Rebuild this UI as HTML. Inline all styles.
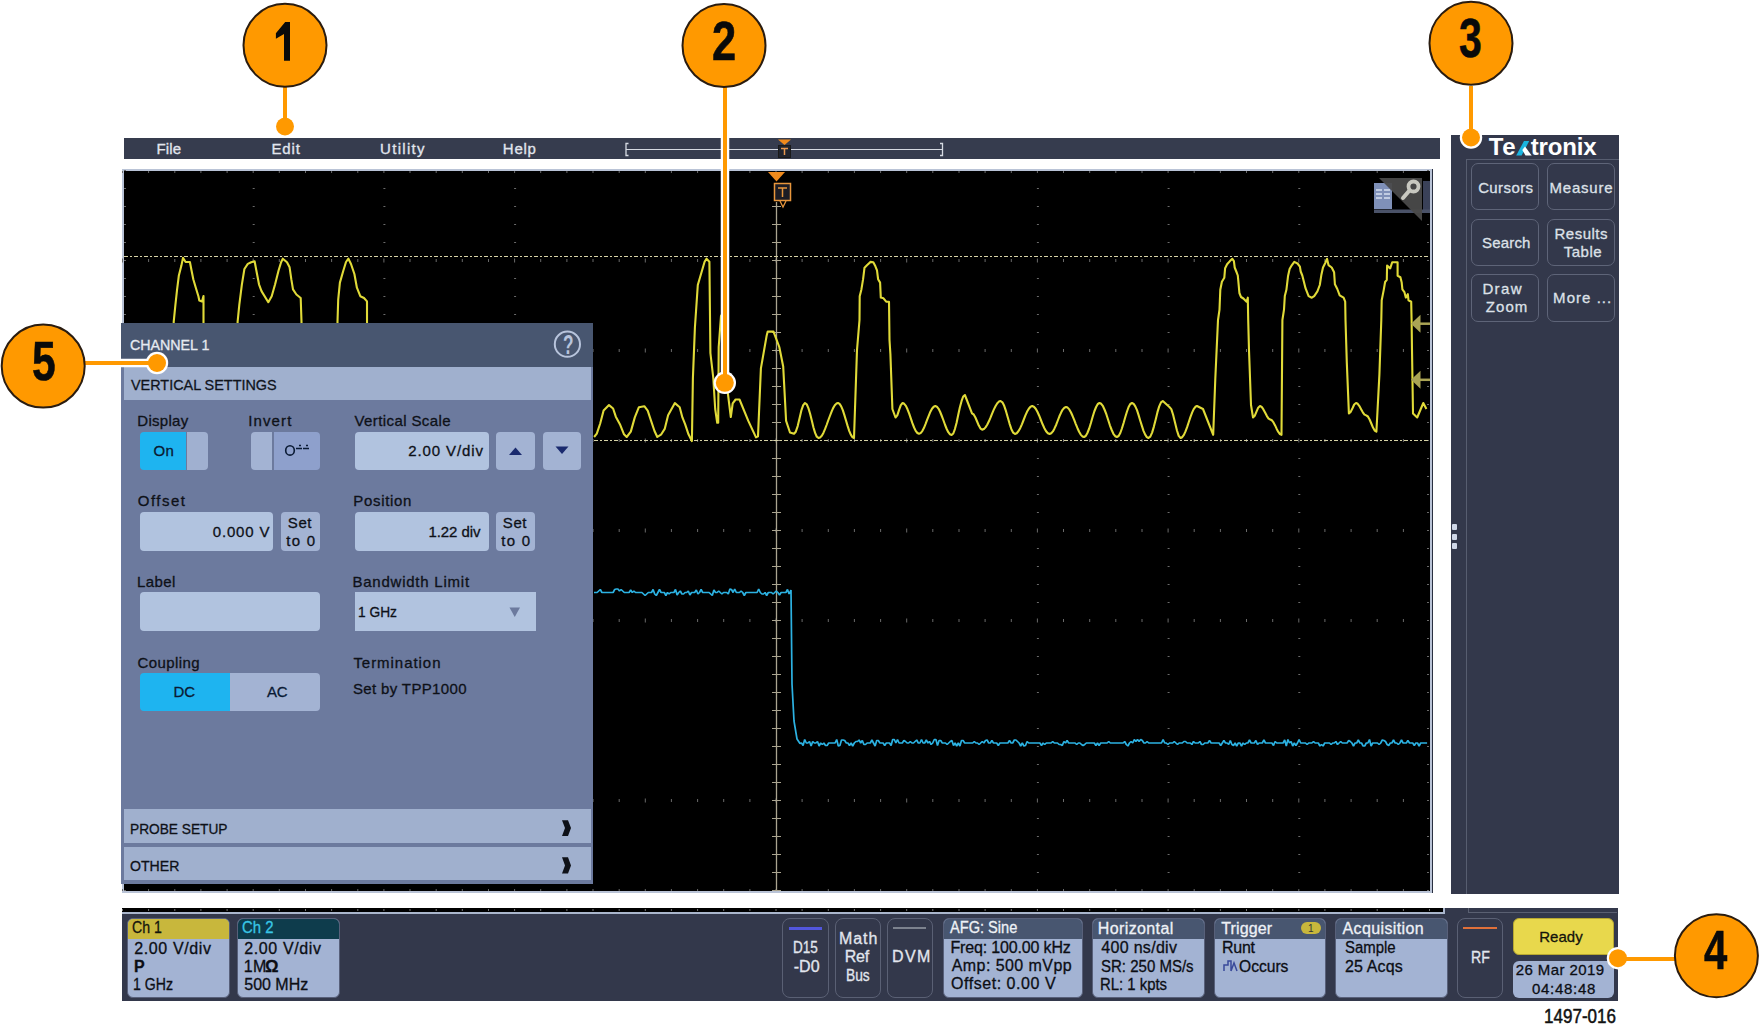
<!DOCTYPE html><html><head><meta charset="utf-8"><style>
*{margin:0;padding:0;box-sizing:border-box}
html,body{width:1760px;height:1030px;overflow:hidden;background:#fff;font-family:"Liberation Sans",sans-serif}
.a{position:absolute}
.t{position:absolute;white-space:nowrap;line-height:1}
svg{position:absolute;left:0;top:0}
.L{position:absolute;left:0;top:0}
</style></head><body>
<div class="a" style="left:124px;top:138px;width:1316px;height:21px;background:#363c4e;"></div>
<div class="t" style="left:156.40px;top:141.40px;font-size:15px;color:#e2e6ee;letter-spacing:0.217px;-webkit-text-stroke:0.3px #e2e6ee;">File</div>
<div class="t" style="left:271.50px;top:141.40px;font-size:15px;color:#e2e6ee;letter-spacing:0.833px;-webkit-text-stroke:0.3px #e2e6ee;">Edit</div>
<div class="t" style="left:380.07px;top:141.40px;font-size:15px;color:#e2e6ee;letter-spacing:1.292px;-webkit-text-stroke:0.3px #e2e6ee;">Utility</div>
<div class="t" style="left:502.80px;top:141.40px;font-size:15px;color:#e2e6ee;letter-spacing:0.758px;-webkit-text-stroke:0.3px #e2e6ee;">Help</div>
<svg width="1760" height="1030"><line x1="626" y1="149.5" x2="942" y2="149.5" stroke="#d6dae2" stroke-width="1"/><path d="M628.5 143.5 H626 V155.5 H628.5 M940 143.5 H942.5 V155.5 H940" fill="none" stroke="#d6dae2" stroke-width="1.3"/><path d="M778 139.5 H791 L784.5 145 Z" fill="#f08a1c"/><rect x="778.5" y="145.5" width="12" height="12" fill="#20242e" stroke="#1a1a1a" stroke-width="1"/><path d="M781 148.5 H788 M784.5 148.5 V155" stroke="#e89850" stroke-width="1.5"/></svg>
<div class="a" style="left:122px;top:169px;width:1311px;height:724px;background:#b9c3d6;"></div>
<div class="a" style="left:1432px;top:169px;width:1px;height:724px;background:#2a3040;"></div>
<div class="a" style="left:124px;top:171px;width:1306px;height:720px;background:#000;"></div>
<svg width="1760" height="1030"><path d="M122.5 258.5v4M148.6 259.0v3M174.8 259.0v3M200.9 259.0v3M227.1 259.0v3M253.2 258.5v4M279.3 259.0v3M305.5 259.0v3M331.6 259.0v3M357.8 259.0v3M383.9 258.5v4M410.0 259.0v3M436.2 259.0v3M462.3 259.0v3M488.5 259.0v3M514.6 258.5v4M540.7 259.0v3M566.9 259.0v3M593.0 259.0v3M619.2 259.0v3M645.3 258.5v4M671.4 259.0v3M697.6 259.0v3M723.7 259.0v3M749.9 259.0v3M776.0 258.5v4M802.1 259.0v3M828.3 259.0v3M854.4 259.0v3M880.6 259.0v3M906.7 258.5v4M932.8 259.0v3M959.0 259.0v3M985.1 259.0v3M1011.3 259.0v3M1037.4 258.5v4M1063.5 259.0v3M1089.7 259.0v3M1115.8 259.0v3M1142.0 259.0v3M1168.1 258.5v4M1194.2 259.0v3M1220.4 259.0v3M1246.5 259.0v3M1272.7 259.0v3M1298.8 258.5v4M1324.9 259.0v3M1351.1 259.0v3M1377.2 259.0v3M1403.4 259.0v3M122.5 348.5v4M148.6 349.0v3M174.8 349.0v3M200.9 349.0v3M227.1 349.0v3M253.2 348.5v4M279.3 349.0v3M305.5 349.0v3M331.6 349.0v3M357.8 349.0v3M383.9 348.5v4M410.0 349.0v3M436.2 349.0v3M462.3 349.0v3M488.5 349.0v3M514.6 348.5v4M540.7 349.0v3M566.9 349.0v3M593.0 349.0v3M619.2 349.0v3M645.3 348.5v4M671.4 349.0v3M697.6 349.0v3M723.7 349.0v3M749.9 349.0v3M776.0 348.5v4M802.1 349.0v3M828.3 349.0v3M854.4 349.0v3M880.6 349.0v3M906.7 348.5v4M932.8 349.0v3M959.0 349.0v3M985.1 349.0v3M1011.3 349.0v3M1037.4 348.5v4M1063.5 349.0v3M1089.7 349.0v3M1115.8 349.0v3M1142.0 349.0v3M1168.1 348.5v4M1194.2 349.0v3M1220.4 349.0v3M1246.5 349.0v3M1272.7 349.0v3M1298.8 348.5v4M1324.9 349.0v3M1351.1 349.0v3M1377.2 349.0v3M1403.4 349.0v3M122.5 438.5v4M148.6 439.0v3M174.8 439.0v3M200.9 439.0v3M227.1 439.0v3M253.2 438.5v4M279.3 439.0v3M305.5 439.0v3M331.6 439.0v3M357.8 439.0v3M383.9 438.5v4M410.0 439.0v3M436.2 439.0v3M462.3 439.0v3M488.5 439.0v3M514.6 438.5v4M540.7 439.0v3M566.9 439.0v3M593.0 439.0v3M619.2 439.0v3M645.3 438.5v4M671.4 439.0v3M697.6 439.0v3M723.7 439.0v3M749.9 439.0v3M776.0 438.5v4M802.1 439.0v3M828.3 439.0v3M854.4 439.0v3M880.6 439.0v3M906.7 438.5v4M932.8 439.0v3M959.0 439.0v3M985.1 439.0v3M1011.3 439.0v3M1037.4 438.5v4M1063.5 439.0v3M1089.7 439.0v3M1115.8 439.0v3M1142.0 439.0v3M1168.1 438.5v4M1194.2 439.0v3M1220.4 439.0v3M1246.5 439.0v3M1272.7 439.0v3M1298.8 438.5v4M1324.9 439.0v3M1351.1 439.0v3M1377.2 439.0v3M1403.4 439.0v3M122.5 528.5v4M148.6 529.0v3M174.8 529.0v3M200.9 529.0v3M227.1 529.0v3M253.2 528.5v4M279.3 529.0v3M305.5 529.0v3M331.6 529.0v3M357.8 529.0v3M383.9 528.5v4M410.0 529.0v3M436.2 529.0v3M462.3 529.0v3M488.5 529.0v3M514.6 528.5v4M540.7 529.0v3M566.9 529.0v3M593.0 529.0v3M619.2 529.0v3M645.3 528.5v4M671.4 529.0v3M697.6 529.0v3M723.7 529.0v3M749.9 529.0v3M776.0 528.5v4M802.1 529.0v3M828.3 529.0v3M854.4 529.0v3M880.6 529.0v3M906.7 528.5v4M932.8 529.0v3M959.0 529.0v3M985.1 529.0v3M1011.3 529.0v3M1037.4 528.5v4M1063.5 529.0v3M1089.7 529.0v3M1115.8 529.0v3M1142.0 529.0v3M1168.1 528.5v4M1194.2 529.0v3M1220.4 529.0v3M1246.5 529.0v3M1272.7 529.0v3M1298.8 528.5v4M1324.9 529.0v3M1351.1 529.0v3M1377.2 529.0v3M1403.4 529.0v3M122.5 618.5v4M148.6 619.0v3M174.8 619.0v3M200.9 619.0v3M227.1 619.0v3M253.2 618.5v4M279.3 619.0v3M305.5 619.0v3M331.6 619.0v3M357.8 619.0v3M383.9 618.5v4M410.0 619.0v3M436.2 619.0v3M462.3 619.0v3M488.5 619.0v3M514.6 618.5v4M540.7 619.0v3M566.9 619.0v3M593.0 619.0v3M619.2 619.0v3M645.3 618.5v4M671.4 619.0v3M697.6 619.0v3M723.7 619.0v3M749.9 619.0v3M776.0 618.5v4M802.1 619.0v3M828.3 619.0v3M854.4 619.0v3M880.6 619.0v3M906.7 618.5v4M932.8 619.0v3M959.0 619.0v3M985.1 619.0v3M1011.3 619.0v3M1037.4 618.5v4M1063.5 619.0v3M1089.7 619.0v3M1115.8 619.0v3M1142.0 619.0v3M1168.1 618.5v4M1194.2 619.0v3M1220.4 619.0v3M1246.5 619.0v3M1272.7 619.0v3M1298.8 618.5v4M1324.9 619.0v3M1351.1 619.0v3M1377.2 619.0v3M1403.4 619.0v3M122.5 798.5v4M148.6 799.0v3M174.8 799.0v3M200.9 799.0v3M227.1 799.0v3M253.2 798.5v4M279.3 799.0v3M305.5 799.0v3M331.6 799.0v3M357.8 799.0v3M383.9 798.5v4M410.0 799.0v3M436.2 799.0v3M462.3 799.0v3M488.5 799.0v3M514.6 798.5v4M540.7 799.0v3M566.9 799.0v3M593.0 799.0v3M619.2 799.0v3M645.3 798.5v4M671.4 799.0v3M697.6 799.0v3M723.7 799.0v3M749.9 799.0v3M776.0 798.5v4M802.1 799.0v3M828.3 799.0v3M854.4 799.0v3M880.6 799.0v3M906.7 798.5v4M932.8 799.0v3M959.0 799.0v3M985.1 799.0v3M1011.3 799.0v3M1037.4 798.5v4M1063.5 799.0v3M1089.7 799.0v3M1115.8 799.0v3M1142.0 799.0v3M1168.1 798.5v4M1194.2 799.0v3M1220.4 799.0v3M1246.5 799.0v3M1272.7 799.0v3M1298.8 798.5v4M1324.9 799.0v3M1351.1 799.0v3M1377.2 799.0v3M1403.4 799.0v3M252.7 188.5h2M252.7 206.5h2M252.7 224.5h2M252.7 242.5h2M252.7 278.5h2M252.7 296.5h2M252.7 314.5h2M252.7 332.5h2M252.7 368.5h2M252.7 386.5h2M252.7 404.5h2M252.7 422.5h2M252.7 458.5h2M252.7 476.5h2M252.7 494.5h2M252.7 512.5h2M252.7 548.5h2M252.7 566.5h2M252.7 584.5h2M252.7 602.5h2M252.7 638.5h2M252.7 656.5h2M252.7 674.5h2M252.7 692.5h2M252.7 728.5h2M252.7 746.5h2M252.7 764.5h2M252.7 782.5h2M252.7 818.5h2M252.7 836.5h2M252.7 854.5h2M252.7 872.5h2M383.4 188.5h2M383.4 206.5h2M383.4 224.5h2M383.4 242.5h2M383.4 278.5h2M383.4 296.5h2M383.4 314.5h2M383.4 332.5h2M383.4 368.5h2M383.4 386.5h2M383.4 404.5h2M383.4 422.5h2M383.4 458.5h2M383.4 476.5h2M383.4 494.5h2M383.4 512.5h2M383.4 548.5h2M383.4 566.5h2M383.4 584.5h2M383.4 602.5h2M383.4 638.5h2M383.4 656.5h2M383.4 674.5h2M383.4 692.5h2M383.4 728.5h2M383.4 746.5h2M383.4 764.5h2M383.4 782.5h2M383.4 818.5h2M383.4 836.5h2M383.4 854.5h2M383.4 872.5h2M514.1 188.5h2M514.1 206.5h2M514.1 224.5h2M514.1 242.5h2M514.1 278.5h2M514.1 296.5h2M514.1 314.5h2M514.1 332.5h2M514.1 368.5h2M514.1 386.5h2M514.1 404.5h2M514.1 422.5h2M514.1 458.5h2M514.1 476.5h2M514.1 494.5h2M514.1 512.5h2M514.1 548.5h2M514.1 566.5h2M514.1 584.5h2M514.1 602.5h2M514.1 638.5h2M514.1 656.5h2M514.1 674.5h2M514.1 692.5h2M514.1 728.5h2M514.1 746.5h2M514.1 764.5h2M514.1 782.5h2M514.1 818.5h2M514.1 836.5h2M514.1 854.5h2M514.1 872.5h2M1036.9 188.5h2M1036.9 206.5h2M1036.9 224.5h2M1036.9 242.5h2M1036.9 278.5h2M1036.9 296.5h2M1036.9 314.5h2M1036.9 332.5h2M1036.9 368.5h2M1036.9 386.5h2M1036.9 404.5h2M1036.9 422.5h2M1036.9 458.5h2M1036.9 476.5h2M1036.9 494.5h2M1036.9 512.5h2M1036.9 548.5h2M1036.9 566.5h2M1036.9 584.5h2M1036.9 602.5h2M1036.9 638.5h2M1036.9 656.5h2M1036.9 674.5h2M1036.9 692.5h2M1036.9 728.5h2M1036.9 746.5h2M1036.9 764.5h2M1036.9 782.5h2M1036.9 818.5h2M1036.9 836.5h2M1036.9 854.5h2M1036.9 872.5h2M1167.6 188.5h2M1167.6 206.5h2M1167.6 224.5h2M1167.6 242.5h2M1167.6 278.5h2M1167.6 296.5h2M1167.6 314.5h2M1167.6 332.5h2M1167.6 368.5h2M1167.6 386.5h2M1167.6 404.5h2M1167.6 422.5h2M1167.6 458.5h2M1167.6 476.5h2M1167.6 494.5h2M1167.6 512.5h2M1167.6 548.5h2M1167.6 566.5h2M1167.6 584.5h2M1167.6 602.5h2M1167.6 638.5h2M1167.6 656.5h2M1167.6 674.5h2M1167.6 692.5h2M1167.6 728.5h2M1167.6 746.5h2M1167.6 764.5h2M1167.6 782.5h2M1167.6 818.5h2M1167.6 836.5h2M1167.6 854.5h2M1167.6 872.5h2M1298.3 188.5h2M1298.3 206.5h2M1298.3 224.5h2M1298.3 242.5h2M1298.3 278.5h2M1298.3 296.5h2M1298.3 314.5h2M1298.3 332.5h2M1298.3 368.5h2M1298.3 386.5h2M1298.3 404.5h2M1298.3 422.5h2M1298.3 458.5h2M1298.3 476.5h2M1298.3 494.5h2M1298.3 512.5h2M1298.3 548.5h2M1298.3 566.5h2M1298.3 584.5h2M1298.3 602.5h2M1298.3 638.5h2M1298.3 656.5h2M1298.3 674.5h2M1298.3 692.5h2M1298.3 728.5h2M1298.3 746.5h2M1298.3 764.5h2M1298.3 782.5h2M1298.3 818.5h2M1298.3 836.5h2M1298.3 854.5h2M1298.3 872.5h2M122.5 171v2M122.5 889v2M148.6 171v2M148.6 889v2M174.8 171v2M174.8 889v2M200.9 171v2M200.9 889v2M227.1 171v2M227.1 889v2M253.2 171v2M253.2 889v2M279.3 171v2M279.3 889v2M305.5 171v2M305.5 889v2M331.6 171v2M331.6 889v2M357.8 171v2M357.8 889v2M383.9 171v2M383.9 889v2M410.0 171v2M410.0 889v2M436.2 171v2M436.2 889v2M462.3 171v2M462.3 889v2M488.5 171v2M488.5 889v2M514.6 171v2M514.6 889v2M540.7 171v2M540.7 889v2M566.9 171v2M566.9 889v2M593.0 171v2M593.0 889v2M619.2 171v2M619.2 889v2M645.3 171v2M645.3 889v2M671.4 171v2M671.4 889v2M697.6 171v2M697.6 889v2M723.7 171v2M723.7 889v2M749.9 171v2M749.9 889v2M776.0 171v2M776.0 889v2M802.1 171v2M802.1 889v2M828.3 171v2M828.3 889v2M854.4 171v2M854.4 889v2M880.6 171v2M880.6 889v2M906.7 171v2M906.7 889v2M932.8 171v2M932.8 889v2M959.0 171v2M959.0 889v2M985.1 171v2M985.1 889v2M1011.3 171v2M1011.3 889v2M1037.4 171v2M1037.4 889v2M1063.5 171v2M1063.5 889v2M1089.7 171v2M1089.7 889v2M1115.8 171v2M1115.8 889v2M1142.0 171v2M1142.0 889v2M1168.1 171v2M1168.1 889v2M1194.2 171v2M1194.2 889v2M1220.4 171v2M1220.4 889v2M1246.5 171v2M1246.5 889v2M1272.7 171v2M1272.7 889v2M1298.8 171v2M1298.8 889v2M1324.9 171v2M1324.9 889v2M1351.1 171v2M1351.1 889v2M1377.2 171v2M1377.2 889v2M1403.4 171v2M1403.4 889v2M124 170.5h2M1427 170.5h2M124 188.5h2M1427 188.5h2M124 206.5h2M1427 206.5h2M124 224.5h2M1427 224.5h2M124 242.5h2M1427 242.5h2M124 260.5h2M1427 260.5h2M124 278.5h2M1427 278.5h2M124 296.5h2M1427 296.5h2M124 314.5h2M1427 314.5h2M124 332.5h2M1427 332.5h2M124 350.5h2M1427 350.5h2M124 368.5h2M1427 368.5h2M124 386.5h2M1427 386.5h2M124 404.5h2M1427 404.5h2M124 422.5h2M1427 422.5h2M124 440.5h2M1427 440.5h2M124 458.5h2M1427 458.5h2M124 476.5h2M1427 476.5h2M124 494.5h2M1427 494.5h2M124 512.5h2M1427 512.5h2M124 530.5h2M1427 530.5h2M124 548.5h2M1427 548.5h2M124 566.5h2M1427 566.5h2M124 584.5h2M1427 584.5h2M124 602.5h2M1427 602.5h2M124 620.5h2M1427 620.5h2M124 638.5h2M1427 638.5h2M124 656.5h2M1427 656.5h2M124 674.5h2M1427 674.5h2M124 692.5h2M1427 692.5h2M124 710.5h2M1427 710.5h2M124 728.5h2M1427 728.5h2M124 746.5h2M1427 746.5h2M124 764.5h2M1427 764.5h2M124 782.5h2M1427 782.5h2M124 800.5h2M1427 800.5h2M124 818.5h2M1427 818.5h2M124 836.5h2M1427 836.5h2M124 854.5h2M1427 854.5h2M124 872.5h2M1427 872.5h2M124 890.5h2M1427 890.5h2" stroke="#6a6a6a" stroke-width="1"/><line x1="776.5" y1="202" x2="776.5" y2="891" stroke="#aaa490" stroke-width="1.3"/><path d="M772 206.5H781M772 224.5H781M772 242.5H781M772 260.5H781M772 278.5H781M772 296.5H781M772 314.5H781M772 332.5H781M772 350.5H781M772 368.5H781M772 386.5H781M772 404.5H781M772 422.5H781M772 440.5H781M772 458.5H781M772 476.5H781M772 494.5H781M772 512.5H781M772 530.5H781M772 548.5H781M772 566.5H781M772 584.5H781M772 602.5H781M772 620.5H781M772 638.5H781M772 656.5H781M772 674.5H781M772 692.5H781M772 710.5H781M772 728.5H781M772 746.5H781M772 764.5H781M772 782.5H781M772 800.5H781M772 818.5H781M772 836.5H781M772 854.5H781M772 872.5H781M772 890.5H781" stroke="#aaa490" stroke-width="1.2"/><line x1="124" y1="256.5" x2="1430" y2="256.5" stroke="#d6d2a6" stroke-width="1.2" stroke-dasharray="4 2 2 2"/><line x1="124" y1="440.5" x2="1430" y2="440.5" stroke="#d6d2a6" stroke-width="1.2" stroke-dasharray="4 2 2 2"/><path d="M768 172 H785 L776.5 181.5 Z" fill="#f08a1c"/><rect x="774.5" y="183.5" width="16" height="17" fill="#1c1c24" stroke="#e8963c" stroke-width="1.5"/><path d="M778 188 H787 M782.5 188 V197" stroke="#e8963c" stroke-width="1.5"/><path d="M780 201 L783 207 L786 201" fill="none" stroke="#e8963c" stroke-width="1.3"/><polyline points="173.7,440.0 173.7,321.8 175.4,304.8 177.1,289.4 178.8,275.8 181.4,265.6 183.0,257.9 185.6,262.0 189.9,262.0 191.6,270.7 193.3,279.2 195.8,287.7 198.4,296.2 199.3,300.5 202.0,301.5 203.5,296.0 203.5,440.0" fill="none" stroke="#e0da38" stroke-width="2.1" stroke-linejoin="round"/><polyline points="237.6,440.0 237.6,321.8 239.3,304.8 241.9,284.3 244.4,269.0 247.8,263.9 251.2,262.2 254.6,261.3 256.4,270.7 259.0,284.3 261.5,291.1 268.3,302.2 271.7,296.2 275.1,284.3 278.5,270.7 281.1,262.2 282.8,258.7 287.0,262.2 289.6,267.3 291.3,279.2 293.0,289.4 296.4,294.5 300.7,298.0 301.5,321.8 301.5,440.0" fill="none" stroke="#e0da38" stroke-width="2.1" stroke-linejoin="round"/><polyline points="337.3,440.0 337.5,321.8 338.2,299.7 339.9,282.6 343.3,270.7 346.0,262.0 348.4,258.7 351.0,264.0 354.4,274.0 356.9,287.7 360.3,296.2 364.0,298.0 367.0,301.4 367.1,440.0" fill="none" stroke="#e0da38" stroke-width="2.1" stroke-linejoin="round"/><polyline points="594.1,437.0 596.8,433.7 600.2,423.5 603.6,410.6 609.0,405.1 613.1,408.5 615.8,416.7 619.9,424.2 624.0,434.3 626.7,437.0 630.8,431.6 634.8,417.4 638.9,407.2 644.3,406.2 647.7,410.6 651.1,420.8 654.5,431.0 657.3,437.0 661.3,434.3 664.7,428.9 668.1,415.3 674.9,403.1 679.7,407.2 682.4,417.4 685.1,424.2 688.5,434.3 691.9,441.1 692.9,378.0 694.9,327.7 697.8,285.0 704.6,261.7 706.5,258.7 709.4,261.7 710.4,353.0 713.3,378.0 715.2,409.0 717.2,422.8 718.2,422.8 718.7,347.0 721.0,316.0 724.0,312.0 726.0,390.0 727.9,393.7 730.8,417.0 732.7,403.4 735.6,399.5 739.5,399.5 748.3,420.9 756.0,437.4 758.0,436.4 760.9,368.4 766.7,335.4 767.7,331.6 773.5,331.6 779.3,347.0 783.2,366.5 786.1,420.9 790.0,432.5 794.0,433.8 794.0,433.8 795.8,431.7 797.7,426.1 799.5,418.4 801.3,410.7 803.2,405.1 805.0,403.0 806.7,404.3 808.4,408.1 810.1,413.8 811.8,420.5 813.4,427.2 815.1,432.9 816.8,436.7 818.5,438.0 820.1,437.4 821.8,435.7 823.4,432.9 825.0,429.2 826.6,425.0 828.2,420.5 829.9,416.0 831.5,411.8 833.1,408.1 834.8,405.3 836.4,403.6 838.0,403.0 839.6,403.9 841.2,406.3 842.8,410.2 844.4,415.1 846.0,420.5 847.6,425.9 849.2,430.8 850.8,434.7 852.4,437.1 854.0,438.0 857.0,350.0 859.5,320.0 859.7,296.2 861.4,289.4 863.1,279.2 864.5,267.7 867.2,265.0 870.6,261.9 873.3,262.2 875.4,266.3 877.0,270.4 878.1,279.2 880.1,282.6 880.8,297.6 883.5,298.3 886.2,301.7 889.0,301.7 889.5,340.0 890.4,354.0 892.4,409.0 895.5,417.5 895.5,417.5 897.3,415.4 899.0,410.2 900.8,405.1 902.6,403.0 904.2,403.8 905.9,405.9 907.5,409.3 909.2,413.6 910.8,418.4 912.4,423.2 914.1,427.5 915.7,430.9 917.4,433.0 919.0,433.8 920.6,433.1 922.3,431.1 923.9,428.1 925.5,424.2 927.1,419.9 928.8,415.6 930.4,411.7 932.0,408.7 933.7,406.7 935.3,406.0 936.9,406.7 938.6,408.8 940.2,412.0 941.8,416.0 943.5,420.5 945.1,425.0 946.7,429.0 948.3,432.2 950.0,434.3 951.6,435.0 953.3,433.5 954.9,429.1 956.6,422.7 958.2,415.0 959.9,407.3 961.6,400.9 963.2,396.5 964.9,395.0 972.0,413.4 972.0,413.4 973.7,414.5 975.4,417.5 977.1,421.5 978.8,425.6 980.5,428.6 982.2,429.7 983.9,429.1 985.5,427.4 987.2,424.7 988.9,421.3 990.6,417.4 992.2,413.3 993.9,409.4 995.6,406.0 997.3,403.3 998.9,401.6 1000.6,401.0 1002.4,402.3 1004.2,405.8 1006.0,411.2 1007.8,417.5 1009.6,423.8 1011.4,429.2 1013.2,432.7 1015.0,434.0 1016.7,433.3 1018.4,431.3 1020.2,428.2 1021.9,424.3 1023.6,420.0 1025.3,415.7 1027.0,411.8 1028.8,408.7 1030.5,406.7 1032.2,406.0 1033.9,406.7 1035.7,408.7 1037.4,411.8 1039.2,415.7 1040.9,420.0 1042.6,424.3 1044.4,428.2 1046.1,431.3 1047.9,433.3 1049.6,434.0 1051.2,433.3 1052.9,431.4 1054.5,428.4 1056.2,424.7 1057.8,420.5 1059.4,416.3 1061.1,412.6 1062.7,409.6 1064.4,407.7 1066.0,407.0 1067.6,407.6 1069.3,409.4 1070.9,412.2 1072.5,415.8 1074.2,419.9 1075.8,424.1 1077.5,428.2 1079.1,431.8 1080.7,434.6 1082.4,436.4 1084.0,437.0 1085.7,436.0 1087.4,433.0 1089.2,428.5 1090.9,423.0 1092.6,417.0 1094.3,411.5 1096.1,407.0 1097.8,404.0 1099.5,403.0 1101.2,403.8 1103.0,406.2 1104.7,410.0 1106.5,414.7 1108.2,420.0 1109.9,425.3 1111.7,430.0 1113.4,433.8 1115.2,436.2 1116.9,437.0 1118.6,436.0 1120.3,433.0 1121.9,428.5 1123.6,423.0 1125.3,417.0 1127.0,411.5 1128.6,407.0 1130.3,404.0 1132.0,403.0 1133.7,403.9 1135.3,406.3 1137.0,410.2 1138.6,415.1 1140.2,420.5 1141.9,425.9 1143.5,430.8 1145.2,434.7 1146.8,437.1 1148.5,438.0 1150.3,436.6 1152.1,432.6 1153.9,426.6 1155.7,419.5 1157.4,412.4 1159.2,406.4 1161.0,402.4 1162.8,401.0 1169.4,407.0 1169.4,407.0 1171.3,409.1 1173.1,414.8 1175.0,422.5 1176.9,430.2 1178.7,435.9 1180.6,438.0 1182.2,437.2 1183.9,434.9 1185.5,431.4 1187.2,426.9 1188.8,422.0 1190.4,417.1 1192.1,412.6 1193.7,409.1 1195.4,406.8 1197.0,406.0 1203.0,409.0 1213.2,434.8 1215.3,378.7 1218.0,320.0 1219.5,309.7 1220.3,289.8 1221.9,281.8 1224.3,277.8 1225.1,268.3 1227.1,264.3 1229.9,261.1 1232.3,258.8 1233.9,261.1 1234.7,267.5 1236.3,271.5 1237.8,275.5 1238.6,284.2 1239.4,293.0 1241.0,297.0 1243.4,298.5 1246.6,301.7 1247.8,297.7 1248.2,320.0 1249.0,350.0 1251.0,405.0 1253.0,417.4 1253.0,417.4 1254.8,415.7 1256.5,411.7 1258.2,407.7 1260.0,406.0 1261.7,406.9 1263.4,409.4 1265.2,412.8 1266.9,416.1 1268.6,418.6 1270.3,419.5 1271.9,420.3 1273.5,422.4 1275.1,425.4 1276.7,428.9 1278.3,431.9 1279.9,434.0 1281.5,434.8 1282.4,320.0 1284.0,309.7 1284.8,296.1 1286.4,289.8 1288.0,276.3 1289.6,269.1 1291.9,265.1 1294.3,261.9 1297.5,263.5 1299.9,266.7 1300.7,271.5 1302.3,275.5 1303.9,281.8 1305.5,288.2 1308.6,296.1 1311.8,297.7 1314.2,296.1 1317.4,291.4 1319.8,285.0 1321.4,274.7 1323.0,267.5 1325.4,262.7 1327.0,258.8 1328.5,265.1 1331.7,267.5 1334.1,272.3 1334.9,284.2 1337.3,289.0 1339.7,295.3 1343.6,297.7 1345.2,301.7 1345.5,320.0 1346.8,362.4 1348.9,413.4 1348.9,413.4 1350.7,411.9 1352.5,408.2 1354.2,404.5 1356.0,403.0 1357.7,403.8 1359.4,406.1 1361.1,409.2 1362.8,412.3 1364.5,414.6 1366.2,415.4 1367.9,416.5 1369.6,419.5 1371.3,423.5 1373.0,427.6 1374.7,430.6 1376.4,431.7 1379.4,374.6 1381.3,320.0 1381.7,300.3 1383.7,290.1 1385.1,282.0 1386.8,279.9 1387.1,265.6 1390.2,268.4 1392.2,262.2 1397.6,262.2 1397.6,275.8 1400.4,277.2 1401.7,282.6 1402.4,289.4 1404.4,292.1 1405.8,297.6 1407.8,294.2 1408.5,300.3 1411.2,301.7 1411.6,320.0 1412.0,350.0 1413.0,413.4 1417.2,417.5 1423.3,403.0 1426.4,409.0" fill="none" stroke="#e0da38" stroke-width="2.1" stroke-linejoin="round"/><polyline points="594.0,592.5 595.5,592.5 597.1,592.5 598.7,591.0 600.3,589.5 601.9,592.5 603.5,592.5 605.1,592.5 606.7,592.5 608.3,592.5 609.9,592.5 611.5,592.5 613.1,592.5 614.7,589.5 616.3,589.0 617.9,589.0 619.5,591.0 621.1,589.5 622.7,591.0 624.3,592.5 625.9,592.5 627.5,592.5 629.1,592.5 630.7,590.0 632.3,592.5 633.9,591.0 635.5,592.5 637.1,592.5 638.7,592.5 640.3,592.5 641.9,592.5 643.5,594.0 645.1,595.5 646.7,594.0 648.3,592.5 649.9,592.5 651.5,592.5 653.1,589.5 654.7,594.0 656.3,595.5 657.9,592.5 659.5,589.5 661.1,592.5 662.7,592.5 664.3,592.5 665.9,595.5 667.5,592.5 669.1,594.0 670.7,592.5 672.3,592.5 673.9,592.5 675.5,589.5 677.1,595.0 678.7,592.5 680.3,591.0 681.9,594.0 683.5,594.0 685.1,592.5 686.7,592.5 688.3,591.0 689.9,595.0 691.5,592.5 693.1,592.5 694.7,592.5 696.3,590.0 697.9,594.0 699.5,592.5 701.1,589.5 702.7,592.5 704.3,592.5 705.9,592.5 707.5,592.5 709.1,592.5 710.7,594.0 712.3,595.5 713.9,590.0 715.5,592.5 717.1,592.5 718.7,591.0 720.3,592.5 721.9,594.0 723.5,592.5 725.1,592.5 726.7,592.5 728.3,594.0 729.9,589.0 731.5,589.5 733.1,592.5 734.7,589.0 736.3,592.5 737.9,592.5 739.5,592.5 741.1,591.0 742.7,592.5 744.3,595.5 745.9,592.5 747.5,592.5 749.1,592.5 750.7,592.5 752.3,592.5 753.9,592.5 755.5,592.5 757.1,592.5 758.7,589.0 760.3,592.5 761.9,594.0 763.5,594.0 765.1,592.5 766.7,595.5 768.3,592.5 769.9,592.5 771.5,592.5 773.1,594.0 774.7,592.5 776.3,591.0 777.9,592.5 779.5,595.0 781.1,592.5 782.7,592.5 784.3,592.5 785.9,592.5 787.5,589.5 789.1,594.0 791.0,590.0 792.0,684.0 794.0,721.0 797.0,739.0 800.0,743.5 801.5,743.0 803.1,745.5 804.7,739.5 806.3,743.0 807.9,743.0 809.5,741.5 811.1,746.0 812.7,741.5 814.3,743.0 815.9,743.0 817.5,741.5 819.1,746.0 820.7,743.0 822.3,744.5 823.9,743.0 825.5,745.5 827.1,745.5 828.7,743.0 830.3,743.0 831.9,743.0 833.5,743.0 835.1,743.0 836.7,739.5 838.3,746.0 839.9,745.5 841.5,740.0 843.1,740.0 844.7,740.5 846.3,743.0 847.9,743.0 849.5,745.5 851.1,743.0 852.7,746.0 854.3,743.0 855.9,741.5 857.5,741.5 859.1,740.0 860.7,743.0 862.3,740.5 863.9,744.5 865.5,744.5 867.1,743.0 868.7,743.0 870.3,743.0 871.9,740.0 873.5,743.0 875.1,746.0 876.7,740.5 878.3,740.5 879.9,743.0 881.5,743.0 883.1,743.0 884.7,745.5 886.3,743.0 887.9,743.0 889.5,743.0 891.1,745.5 892.7,739.5 894.3,739.5 895.9,743.0 897.5,739.5 899.1,743.0 900.7,743.0 902.3,743.0 903.9,740.5 905.5,741.5 907.1,743.0 908.7,743.0 910.3,741.5 911.9,743.0 913.5,743.0 915.1,741.5 916.7,740.0 918.3,743.0 919.9,743.0 921.5,739.5 923.1,743.0 924.7,743.0 926.3,740.0 927.9,743.0 929.5,741.5 931.1,744.5 932.7,743.0 934.3,739.5 935.9,739.5 937.5,745.5 939.1,740.5 940.7,740.5 942.3,743.0 943.9,743.0 945.5,743.0 947.1,744.5 948.7,743.0 950.3,741.5 951.9,740.5 953.5,745.5 955.1,743.0 956.7,746.0 958.3,743.0 959.9,746.0 961.5,740.5 963.1,740.5 964.7,743.0 966.3,743.0 967.9,743.0 969.5,743.0 971.1,743.0 972.7,743.0 974.3,741.5 975.9,743.0 977.5,743.0 979.1,744.5 980.7,743.0 982.3,741.5 983.9,743.0 985.5,740.5 987.1,740.0 988.7,743.0 990.3,743.0 991.9,740.5 993.5,743.0 995.1,743.0 996.7,743.0 998.3,745.5 999.9,743.0 1001.5,743.0 1003.1,743.0 1004.7,743.0 1006.3,743.0 1007.9,743.0 1009.5,740.5 1011.1,743.0 1012.7,743.0 1014.3,740.0 1015.9,740.0 1017.5,741.5 1019.1,743.0 1020.7,746.0 1022.3,743.0 1023.9,746.0 1025.5,745.5 1027.1,741.5 1028.7,743.0 1030.3,743.0 1031.9,743.0 1033.5,743.0 1035.1,743.0 1036.7,743.0 1038.3,743.0 1039.9,743.0 1041.5,745.5 1043.1,743.0 1044.7,744.5 1046.3,743.0 1047.9,743.0 1049.5,743.0 1051.1,743.0 1052.7,741.5 1054.3,743.0 1055.9,743.0 1057.5,743.0 1059.1,744.5 1060.7,744.5 1062.3,745.5 1063.9,741.5 1065.5,743.0 1067.1,740.5 1068.7,743.0 1070.3,743.0 1071.9,743.0 1073.5,743.0 1075.1,743.0 1076.7,744.5 1078.3,743.0 1079.9,743.0 1081.5,744.5 1083.1,745.5 1084.7,744.5 1086.3,743.0 1087.9,743.0 1089.5,743.0 1091.1,743.0 1092.7,743.0 1094.3,743.0 1095.9,745.5 1097.5,743.0 1099.1,745.5 1100.7,743.0 1102.3,743.0 1103.9,743.0 1105.5,743.0 1107.1,743.0 1108.7,741.5 1110.3,743.0 1111.9,743.0 1113.5,743.0 1115.1,743.0 1116.7,743.0 1118.3,743.0 1119.9,743.0 1121.5,743.0 1123.1,743.0 1124.7,741.5 1126.3,744.5 1127.9,746.0 1129.5,743.0 1131.1,741.5 1132.7,743.0 1134.3,739.5 1135.9,741.5 1137.5,739.5 1139.1,741.5 1140.7,739.5 1142.3,740.5 1143.9,743.0 1145.5,743.0 1147.1,741.5 1148.7,743.0 1150.3,743.0 1151.9,743.0 1153.5,743.0 1155.1,743.0 1156.7,743.0 1158.3,743.0 1159.9,743.0 1161.5,743.0 1163.1,739.5 1164.7,743.0 1166.3,743.0 1167.9,744.5 1169.5,743.0 1171.1,743.0 1172.7,743.0 1174.3,741.5 1175.9,743.0 1177.5,744.5 1179.1,743.0 1180.7,743.0 1182.3,743.0 1183.9,741.5 1185.5,741.5 1187.1,743.0 1188.7,743.0 1190.3,743.0 1191.9,744.5 1193.5,741.5 1195.1,743.0 1196.7,743.0 1198.3,743.0 1199.9,741.5 1201.5,744.5 1203.1,744.5 1204.7,743.0 1206.3,743.0 1207.9,743.0 1209.5,740.5 1211.1,743.0 1212.7,743.0 1214.3,743.0 1215.9,743.0 1217.5,743.0 1219.1,743.0 1220.7,745.5 1222.3,743.0 1223.9,740.5 1225.5,743.0 1227.1,743.0 1228.7,744.5 1230.3,740.5 1231.9,744.5 1233.5,745.5 1235.1,743.0 1236.7,746.0 1238.3,743.0 1239.9,743.0 1241.5,746.0 1243.1,743.0 1244.7,744.5 1246.3,743.0 1247.9,743.0 1249.5,740.0 1251.1,743.0 1252.7,743.0 1254.3,743.0 1255.9,740.5 1257.5,744.5 1259.1,743.0 1260.7,743.0 1262.3,743.0 1263.9,740.0 1265.5,743.0 1267.1,743.0 1268.7,743.0 1270.3,743.0 1271.9,743.0 1273.5,745.5 1275.1,741.5 1276.7,743.0 1278.3,743.0 1279.9,743.0 1281.5,743.0 1283.1,743.0 1284.7,740.0 1286.3,746.0 1287.9,739.5 1289.5,743.0 1291.1,741.5 1292.7,746.0 1294.3,743.0 1295.9,745.5 1297.5,743.0 1299.1,739.5 1300.7,743.0 1302.3,743.0 1303.9,743.0 1305.5,743.0 1307.1,744.5 1308.7,743.0 1310.3,743.0 1311.9,743.0 1313.5,741.5 1315.1,743.0 1316.7,743.0 1318.3,743.0 1319.9,746.0 1321.5,744.5 1323.1,746.0 1324.7,743.0 1326.3,743.0 1327.9,743.0 1329.5,743.0 1331.1,744.5 1332.7,743.0 1334.3,743.0 1335.9,741.5 1337.5,744.5 1339.1,743.0 1340.7,741.5 1342.3,743.0 1343.9,743.0 1345.5,743.0 1347.1,743.0 1348.7,740.5 1350.3,741.5 1351.9,743.0 1353.5,746.0 1355.1,743.0 1356.7,743.0 1358.3,740.0 1359.9,743.0 1361.5,743.0 1363.1,746.0 1364.7,746.0 1366.3,743.0 1367.9,743.0 1369.5,739.5 1371.1,746.0 1372.7,743.0 1374.3,743.0 1375.9,743.0 1377.5,743.0 1379.1,744.5 1380.7,743.0 1382.3,740.0 1383.9,740.5 1385.5,741.5 1387.1,744.5 1388.7,745.5 1390.3,743.0 1391.9,743.0 1393.5,740.0 1395.1,743.0 1396.7,743.0 1398.3,744.5 1399.9,743.0 1401.5,740.0 1403.1,743.0 1404.7,743.0 1406.3,743.0 1407.9,740.5 1409.5,743.0 1411.1,743.0 1412.7,743.0 1414.3,745.5 1415.9,743.0 1417.5,743.0 1419.1,746.0 1420.7,743.0 1422.3,743.0 1423.9,743.0 1425.5,743.0 1427.1,743.0" fill="none" stroke="#2cb2e2" stroke-width="1.7" stroke-linejoin="bevel"/><path d="M1411 323.7 L1420.5 314.7 V332.7 Z" fill="#aaa455"/><line x1="1420" y1="323.7" x2="1430" y2="323.7" stroke="#aaa455" stroke-width="2.5"/><path d="M1411 379.8 L1420.5 370.8 V388.8 Z" fill="#aaa455"/><line x1="1420" y1="379.8" x2="1430" y2="379.8" stroke="#aaa455" stroke-width="2.5"/><rect x="1423" y="181" width="7" height="30" fill="#3a4158"/><rect x="1374" y="209.5" width="56" height="3.5" fill="#4a5268"/><rect x="1374" y="183" width="18" height="26" fill="#7f90b8"/><path d="M1376 190h6M1384 190h6M1376 194h6M1384 194h6M1376 198h6M1384 198h6" stroke="#d8e0f0" stroke-width="1.5"/><path d="M1379 178 H1422 V221 Z" fill="#4a4a4a" fill-opacity="0.95"/><circle cx="1413.5" cy="186.5" r="5" fill="none" stroke="#c8c8c0" stroke-width="3.8"/><line x1="1409" y1="191" x2="1403" y2="198" stroke="#c8c8c0" stroke-width="4" stroke-linecap="round"/></svg>
<div class="a" style="left:1451px;top:135px;width:168px;height:759px;background:#33384b;"></div>
<div class="a" style="left:1466px;top:159px;width:1px;height:735px;background:#575d70;"></div>
<div class="a" style="left:1466px;top:159px;width:153px;height:1px;background:#575d70;"></div>
<div class="t" style="left:1488.66px;top:135.18px;font-size:24px;color:#ffffff;font-weight:bold;letter-spacing:0.600px;">Te</div>
<div class="t" style="left:1530.76px;top:135.18px;font-size:24px;color:#ffffff;font-weight:bold;letter-spacing:-0.188px;">tronix</div>
<svg width="1760" height="1030"><path d="M1516.2 155.5 L1521.6 155.5 L1529.2 141 L1524 141 Z" fill="#1ab4e0"/><path d="M1522.3 150 L1525 146.5 L1531.7 155.5 L1525.5 155.5 Z" fill="#ffffff"/></svg>
<div class="a" style="left:1471px;top:163px;width:68px;height:47px;border:1.4px solid #5e6478;border-radius:7px"></div>
<div class="a" style="left:1547px;top:163px;width:68px;height:47px;border:1.4px solid #5e6478;border-radius:7px"></div>
<div class="a" style="left:1471px;top:219px;width:68px;height:47px;border:1.4px solid #5e6478;border-radius:7px"></div>
<div class="a" style="left:1547px;top:219px;width:68px;height:47px;border:1.4px solid #5e6478;border-radius:7px"></div>
<div class="a" style="left:1471px;top:274px;width:68px;height:48px;border:1.4px solid #5e6478;border-radius:7px"></div>
<div class="a" style="left:1547px;top:274px;width:68px;height:48px;border:1.4px solid #5e6478;border-radius:7px"></div>
<div class="t" style="left:1478.15px;top:180.10px;font-size:15px;color:#dde1e8;letter-spacing:0.396px;-webkit-text-stroke:0.3px #dde1e8;">Cursors</div>
<div class="t" style="left:1549.60px;top:180.10px;font-size:15px;color:#dde1e8;letter-spacing:0.775px;-webkit-text-stroke:0.3px #dde1e8;">Measure</div>
<div class="t" style="left:1482.03px;top:234.80px;font-size:15px;color:#dde1e8;letter-spacing:0.180px;-webkit-text-stroke:0.3px #dde1e8;">Search</div>
<div class="t" style="left:1554.50px;top:226.00px;font-size:15px;color:#dde1e8;letter-spacing:0.500px;-webkit-text-stroke:0.3px #dde1e8;">Results</div>
<div class="t" style="left:1563.70px;top:244.20px;font-size:15px;color:#dde1e8;letter-spacing:0.537px;-webkit-text-stroke:0.3px #dde1e8;">Table</div>
<div class="t" style="left:1482.40px;top:280.90px;font-size:15px;color:#dde1e8;letter-spacing:1.358px;-webkit-text-stroke:0.3px #dde1e8;">Draw</div>
<div class="t" style="left:1485.75px;top:299.40px;font-size:15px;color:#dde1e8;letter-spacing:1.075px;-webkit-text-stroke:0.3px #dde1e8;">Zoom</div>
<div class="t" style="left:1553.10px;top:290.10px;font-size:15px;color:#dde1e8;letter-spacing:1.043px;-webkit-text-stroke:0.3px #dde1e8;">More ...</div>
<svg width="1760" height="1030"><rect x="1452" y="524" width="5" height="6" rx="1" fill="#d0d8e8"/><rect x="1452" y="534" width="5" height="6" rx="1" fill="#d0d8e8"/><rect x="1452" y="543" width="5" height="6" rx="1" fill="#d0d8e8"/></svg>
<div class="a" style="left:122px;top:908px;width:1496px;height:93px;background:#33384b;"></div>
<div class="a" style="left:122px;top:908px;width:1323px;height:6px;background:#aab6cc;"></div>
<div class="a" style="left:122px;top:908px;width:1320.5px;height:4px;background:#000;"></div>
<div class="a" style="left:1467.5px;top:908px;width:1.0px;height:5px;background:#5a6072;"></div>
<div class="a" style="left:1468px;top:912.3px;width:148.5px;height:1.0px;background:#5a6072;"></div>
<svg width="1760" height="1030"><path d="M122.5 909v2M148.6 909v2M174.8 909v2M200.9 909v2M227.1 909v2M253.2 909v2M279.3 909v2M305.5 909v2M331.6 909v2M357.8 909v2M383.9 909v2M410.0 909v2M436.2 909v2M462.3 909v2M488.5 909v2M514.6 909v2M540.7 909v2M566.9 909v2M593.0 909v2M619.2 909v2M645.3 909v2M671.4 909v2M697.6 909v2M723.7 909v2M749.9 909v2M776.0 909v2M802.1 909v2M828.3 909v2M854.4 909v2M880.6 909v2M906.7 909v2M932.8 909v2M959.0 909v2M985.1 909v2M1011.3 909v2M1037.4 909v2M1063.5 909v2M1089.7 909v2M1115.8 909v2M1142.0 909v2M1168.1 909v2M1194.2 909v2M1220.4 909v2M1246.5 909v2M1272.7 909v2M1298.8 909v2M1324.9 909v2M1351.1 909v2M1377.2 909v2M1403.4 909v2M1429.5 909v2" stroke="#777" stroke-width="1"/></svg>
<div class="a" style="left:126.5px;top:917.5px;width:103.5px;height:80.5px;background:#a3b3d3;border-radius:6px;overflow:hidden;border:1px solid #58607a"><div style="position:absolute;left:0;top:0;right:0;height:20px;background:#c8b73c"></div></div>
<div class="t" style="left:131.79px;top:920.16px;font-size:16px;color:#14140c;transform:scaleX(0.8840);transform-origin:0 0;-webkit-text-stroke:0.3px #14140c;">Ch 1</div>
<div class="t" style="left:134.20px;top:940.66px;font-size:16px;color:#0c0e14;letter-spacing:0.631px;-webkit-text-stroke:0.3px #0c0e14;">2.00 V/div</div>
<div class="t" style="left:133.96px;top:958.76px;font-size:16px;color:#0c0e14;font-weight:bold;-webkit-text-stroke:0.3px #0c0e14;">P</div>
<div class="t" style="left:133.24px;top:976.96px;font-size:16px;color:#0c0e14;transform:scaleX(0.8817);transform-origin:0 0;-webkit-text-stroke:0.3px #0c0e14;">1 GHz</div>
<div class="a" style="left:236.5px;top:917.5px;width:103.0px;height:80.5px;background:#a3b3d3;border-radius:6px;overflow:hidden;border:1px solid #58607a"><div style="position:absolute;left:0;top:0;right:0;height:20px;background:#0e3c4c"></div></div>
<div class="t" style="left:241.66px;top:920.16px;font-size:16px;color:#39c6e6;transform:scaleX(0.9305);transform-origin:0 0;-webkit-text-stroke:0.3px #39c6e6;">Ch 2</div>
<div class="t" style="left:244.20px;top:940.66px;font-size:16px;color:#0c0e14;letter-spacing:0.631px;-webkit-text-stroke:0.3px #0c0e14;">2.00 V/div</div>
<div class="t" style="left:243.80px;top:958.76px;font-size:16px;color:#0c0e14;letter-spacing:0.240px;-webkit-text-stroke:0.3px #0c0e14;">1M</div>
<div class="t" style="left:265.33px;top:958.76px;font-size:16px;color:#0c0e14;font-weight:bold;transform:scaleX(1.0517);transform-origin:0 0;-webkit-text-stroke:0.3px #0c0e14;">&Omega;</div>
<div class="t" style="left:244.36px;top:976.96px;font-size:16px;color:#0c0e14;letter-spacing:-0.040px;-webkit-text-stroke:0.3px #0c0e14;">500 MHz</div>
<div class="a" style="left:782px;top:917.5px;width:47px;height:80.5px;border:1.3px solid #5a6074;border-radius:8px"></div>
<div class="a" style="left:789px;top:927px;width:33px;height:2.5px;background:#5256dc;"></div>
<div class="t" style="left:793.32px;top:940.16px;font-size:16px;color:#e2e6ee;transform:scaleX(0.8455);transform-origin:0 0;-webkit-text-stroke:0.3px #e2e6ee;">D15</div>
<div class="t" style="left:793.76px;top:958.86px;font-size:16px;color:#e2e6ee;letter-spacing:0.020px;-webkit-text-stroke:0.3px #e2e6ee;">-D0</div>
<div class="a" style="left:834.5px;top:917.5px;width:46.5px;height:80.5px;border:1.3px solid #5a6074;border-radius:8px"></div>
<div class="t" style="left:838.92px;top:930.86px;font-size:16px;color:#e2e6ee;letter-spacing:0.940px;-webkit-text-stroke:0.3px #e2e6ee;">Math</div>
<div class="t" style="left:844.72px;top:949.26px;font-size:16px;color:#e2e6ee;letter-spacing:-0.240px;-webkit-text-stroke:0.3px #e2e6ee;">Ref</div>
<div class="t" style="left:845.90px;top:967.56px;font-size:16px;color:#e2e6ee;transform:scaleX(0.8618);transform-origin:0 0;-webkit-text-stroke:0.3px #e2e6ee;">Bus</div>
<div class="a" style="left:886.5px;top:917.5px;width:46.5px;height:80.5px;border:1.3px solid #5a6074;border-radius:8px"></div>
<div class="a" style="left:893px;top:927.2px;width:33px;height:2.099999999999909px;background:#7c828e;"></div>
<div class="t" style="left:892.02px;top:949.26px;font-size:16px;color:#e2e6ee;letter-spacing:1.330px;-webkit-text-stroke:0.3px #e2e6ee;">DVM</div>
<div class="a" style="left:943px;top:917.5px;width:139.5px;height:80.5px;background:#a3b3d3;border-radius:6px;overflow:hidden;border:1px solid #58607a"><div style="position:absolute;left:0;top:0;right:0;height:20px;background:#485670"></div></div>
<div class="t" style="left:950.30px;top:920.26px;font-size:16px;color:#eef1f6;transform:scaleX(0.9122);transform-origin:0 0;-webkit-text-stroke:0.3px #eef1f6;">AFG: Sine</div>
<div class="t" style="left:950.42px;top:939.56px;font-size:16px;color:#0c0e14;letter-spacing:-0.155px;-webkit-text-stroke:0.3px #0c0e14;">Freq: 100.00 kHz</div>
<div class="t" style="left:951.70px;top:958.36px;font-size:16px;color:#0c0e14;letter-spacing:0.435px;-webkit-text-stroke:0.3px #0c0e14;">Amp: 500 mVpp</div>
<div class="t" style="left:950.98px;top:976.26px;font-size:16px;color:#0c0e14;letter-spacing:0.546px;-webkit-text-stroke:0.3px #0c0e14;">Offset: 0.00 V</div>
<div class="a" style="left:1092px;top:917.5px;width:113px;height:80.5px;background:#a3b3d3;border-radius:6px;overflow:hidden;border:1px solid #58607a"><div style="position:absolute;left:0;top:0;right:0;height:20px;background:#485670"></div></div>
<div class="t" style="left:1097.82px;top:920.56px;font-size:16px;color:#eef1f6;letter-spacing:0.382px;-webkit-text-stroke:0.3px #eef1f6;">Horizontal</div>
<div class="t" style="left:1101.28px;top:940.26px;font-size:16px;color:#0c0e14;letter-spacing:0.307px;-webkit-text-stroke:0.3px #0c0e14;">400 ns/div</div>
<div class="t" style="left:1100.92px;top:958.76px;font-size:16px;color:#0c0e14;transform:scaleX(0.9380);transform-origin:0 0;-webkit-text-stroke:0.3px #0c0e14;">SR: 250 MS/s</div>
<div class="t" style="left:1100.41px;top:977.16px;font-size:16px;color:#0c0e14;transform:scaleX(0.9307);transform-origin:0 0;-webkit-text-stroke:0.3px #0c0e14;">RL: 1 kpts</div>
<div class="a" style="left:1214px;top:917.5px;width:112px;height:80.5px;background:#a3b3d3;border-radius:6px;overflow:hidden;border:1px solid #58607a"><div style="position:absolute;left:0;top:0;right:0;height:20px;background:#485670"></div></div>
<div class="t" style="left:1221.28px;top:920.56px;font-size:16px;color:#eef1f6;letter-spacing:0.117px;-webkit-text-stroke:0.3px #eef1f6;">Trigger</div>
<div class="a" style="left:1301px;top:922px;width:20px;height:12px;border-radius:6px;background:#c8b73c"></div>
<div class="t" style="left:1308.08px;top:923.53px;font-size:10px;color:#333;">1</div>
<div class="t" style="left:1221.92px;top:940.26px;font-size:16px;color:#0c0e14;letter-spacing:-0.227px;-webkit-text-stroke:0.3px #0c0e14;">Runt</div>
<div class="t" style="left:1239.00px;top:958.76px;font-size:16px;color:#0c0e14;transform:scaleX(0.9745);transform-origin:0 0;-webkit-text-stroke:0.3px #0c0e14;">Occurs</div>
<svg width="1760" height="1030"><path d="M1224 971 V965 H1228 V961 H1231 V971 M1231 971 L1234 963 L1237 971" fill="none" stroke="#3a4a9a" stroke-width="1.5"/></svg>
<div class="a" style="left:1335px;top:917.5px;width:113px;height:80.5px;background:#a3b3d3;border-radius:6px;overflow:hidden;border:1px solid #58607a"><div style="position:absolute;left:0;top:0;right:0;height:20px;background:#485670"></div></div>
<div class="t" style="left:1342.50px;top:920.56px;font-size:16px;color:#eef1f6;letter-spacing:0.380px;-webkit-text-stroke:0.3px #eef1f6;">Acquisition</div>
<div class="t" style="left:1345.03px;top:940.26px;font-size:16px;color:#0c0e14;transform:scaleX(0.9323);transform-origin:0 0;-webkit-text-stroke:0.3px #0c0e14;">Sample</div>
<div class="t" style="left:1344.90px;top:958.76px;font-size:16px;color:#0c0e14;letter-spacing:0.167px;-webkit-text-stroke:0.3px #0c0e14;">25 Acqs</div>
<div class="a" style="left:1457px;top:917.5px;width:46px;height:80.5px;border:1.3px solid #5a6074;border-radius:8px"></div>
<div class="a" style="left:1463px;top:926.5px;width:34px;height:2.5px;background:#e0703a;"></div>
<div class="t" style="left:1471.17px;top:949.86px;font-size:16px;color:#e2e6ee;transform:scaleX(0.8848);transform-origin:0 0;-webkit-text-stroke:0.3px #e2e6ee;">RF</div>
<div class="a" style="left:1513px;top:917.5px;width:101px;height:37.5px;border-radius:6px;background:#e8d84c;border:1px solid #b8a830"></div>
<div class="t" style="left:1539.20px;top:929.30px;font-size:15px;color:#14140c;letter-spacing:0.037px;-webkit-text-stroke:0.3px #14140c;">Ready</div>
<div class="a" style="left:1513px;top:961px;width:101px;height:37px;border-radius:6px;background:#a3b3d3"></div>
<div class="t" style="left:1515.75px;top:962.10px;font-size:15px;color:#0c0e14;letter-spacing:0.410px;-webkit-text-stroke:0.3px #0c0e14;">26 Mar 2019</div>
<div class="t" style="left:1531.88px;top:980.60px;font-size:15px;color:#0c0e14;letter-spacing:0.739px;-webkit-text-stroke:0.3px #0c0e14;">04:48:48</div>
<div class="a" style="left:121px;top:322.5px;width:472px;height:561.5px;background:#6c7a9e;"></div>
<div class="a" style="left:121px;top:322.5px;width:472px;height:44.0px;background:#485670;"></div>
<div class="t" style="left:129.69px;top:336.80px;font-size:15px;color:#e6eaf0;transform:scaleX(0.9489);transform-origin:0 0;-webkit-text-stroke:0.3px #e6eaf0;">CHANNEL 1</div>
<svg width="1760" height="1030"><circle cx="567.4" cy="344.2" r="12.6" fill="none" stroke="#b8c4dc" stroke-width="2"/></svg>
<div class="t" style="left:563.22px;top:331.06px;font-size:28.00px;color:#b8c4dc;font-weight:bold;transform:scaleX(0.6162);transform-origin:0 0;">?</div>
<div class="a" style="left:124px;top:366.5px;width:467px;height:33.5px;background:#a0b0ce;"></div>
<div class="t" style="left:131.00px;top:376.88px;font-size:15.5px;color:#10141c;transform:scaleX(0.9290);transform-origin:0 0;-webkit-text-stroke:0.3px #10141c;">VERTICAL SETTINGS</div>
<div class="t" style="left:137.30px;top:412.80px;font-size:15px;color:#0e1118;letter-spacing:0.283px;-webkit-text-stroke:0.3px #0e1118;">Display</div>
<div class="t" style="left:248.15px;top:412.80px;font-size:15px;color:#0e1118;letter-spacing:1.130px;-webkit-text-stroke:0.3px #0e1118;">Invert</div>
<div class="t" style="left:354.50px;top:412.80px;font-size:15px;color:#0e1118;letter-spacing:0.400px;-webkit-text-stroke:0.3px #0e1118;">Vertical Scale</div>
<div class="a" style="left:139.7px;top:431.7px;width:46.3px;height:38.6px;background:#1eb4f0;border-radius:4px 0 0 4px"></div>
<div class="a" style="left:186.8px;top:431.7px;width:21.1px;height:38.6px;background:#a0b0d0;border-radius:0 4px 4px 0"></div>
<div class="t" style="left:153.42px;top:443.20px;font-size:15px;color:#0a1a34;letter-spacing:0.550px;-webkit-text-stroke:0.3px #0a1a34;">On</div>
<div class="a" style="left:250.9px;top:432.1px;width:20.8px;height:37.9px;background:#a3b3d3;border-radius:4px 0 0 4px"></div>
<div class="a" style="left:273.5px;top:432.1px;width:46.4px;height:37.9px;background:#8ea0cc;border-radius:0 4px 4px 0"></div>
<svg width="1760" height="1030"><ellipse cx="290" cy="450.4" rx="4.3" ry="4.7" fill="none" stroke="#0a1a34" stroke-width="1.6"/><path d="M296 448.5h6M303 448.5h6M299 445.5h2M306 445.5h2" stroke="#0a1a34" stroke-width="1.3"/></svg>
<div class="a" style="left:355px;top:432px;width:134px;height:38px;background:#b1c3df;border-radius:4px"></div>
<div class="t" style="left:408.15px;top:442.80px;font-size:15px;color:#0e1118;letter-spacing:0.908px;-webkit-text-stroke:0.3px #0e1118;">2.00 V/div</div>
<div class="a" style="left:496px;top:432px;width:38.5px;height:38px;background:#a3b3d3;border-radius:4px"></div>
<div class="a" style="left:543px;top:432px;width:38px;height:38px;background:#a3b3d3;border-radius:4px"></div>
<svg width="1760" height="1030"><path d="M509 455 L515.5 447.5 L522 455 Z" fill="#1a2a6e"/><path d="M555.5 446.5 L568.5 446.5 L562 454 Z" fill="#1a2a6e"/></svg>
<div class="t" style="left:137.82px;top:492.70px;font-size:15px;color:#0e1118;letter-spacing:1.480px;-webkit-text-stroke:0.3px #0e1118;">Offset</div>
<div class="a" style="left:139.5px;top:512px;width:133.5px;height:38.5px;background:#b1c3df;border-radius:4px"></div>
<div class="t" style="left:212.77px;top:524.10px;font-size:15px;color:#0e1118;letter-spacing:0.825px;-webkit-text-stroke:0.3px #0e1118;">0.000 V</div>
<div class="a" style="left:281px;top:512px;width:38.5px;height:38.5px;background:#a3b3d3;border-radius:4px"></div>
<div class="t" style="left:287.82px;top:514.60px;font-size:15px;color:#0e1118;letter-spacing:0.588px;-webkit-text-stroke:0.3px #0e1118;">Set</div>
<div class="t" style="left:286.22px;top:533.10px;font-size:15px;color:#0e1118;letter-spacing:1.292px;-webkit-text-stroke:0.3px #0e1118;">to 0</div>
<div class="t" style="left:353.30px;top:492.70px;font-size:15px;color:#0e1118;letter-spacing:0.668px;-webkit-text-stroke:0.3px #0e1118;">Position</div>
<div class="a" style="left:355px;top:512px;width:134px;height:38.5px;background:#b1c3df;border-radius:4px"></div>
<div class="t" style="left:428.38px;top:524.10px;font-size:15px;color:#0e1118;letter-spacing:-0.064px;-webkit-text-stroke:0.3px #0e1118;">1.22 div</div>
<div class="a" style="left:496px;top:512px;width:38.5px;height:38.5px;background:#a3b3d3;border-radius:4px"></div>
<div class="t" style="left:502.82px;top:514.60px;font-size:15px;color:#0e1118;letter-spacing:0.588px;-webkit-text-stroke:0.3px #0e1118;">Set</div>
<div class="t" style="left:501.22px;top:533.10px;font-size:15px;color:#0e1118;letter-spacing:1.292px;-webkit-text-stroke:0.3px #0e1118;">to 0</div>
<div class="t" style="left:137.00px;top:573.70px;font-size:15px;color:#0e1118;letter-spacing:0.431px;-webkit-text-stroke:0.3px #0e1118;">Label</div>
<div class="a" style="left:140px;top:592px;width:180px;height:39px;background:#b1c3df;border-radius:4px"></div>
<div class="t" style="left:352.50px;top:573.70px;font-size:15px;color:#0e1118;letter-spacing:0.762px;-webkit-text-stroke:0.3px #0e1118;">Bandwidth Limit</div>
<div class="a" style="left:354.7px;top:592px;width:181.3px;height:39px;background:#b1c3df;border-radius:0px"></div>
<div class="t" style="left:358.37px;top:604.10px;font-size:15px;color:#0e1118;transform:scaleX(0.9159);transform-origin:0 0;-webkit-text-stroke:0.3px #0e1118;">1 GHz</div>
<svg width="1760" height="1030"><path d="M509.5 607.5 L520 607.5 L514.75 617 Z" fill="#6c7a9e"/></svg>
<div class="t" style="left:137.45px;top:654.60px;font-size:15px;color:#0e1118;letter-spacing:0.411px;-webkit-text-stroke:0.3px #0e1118;">Coupling</div>
<div class="a" style="left:140px;top:673px;width:89.6px;height:38.2px;background:#1eb4f0;border-radius:4px 0 0 4px"></div>
<div class="a" style="left:229.6px;top:673px;width:90.1px;height:38.2px;background:#a3b3d3;border-radius:0 4px 4px 0"></div>
<div class="t" style="left:173.40px;top:684.30px;font-size:15px;color:#0a1a34;letter-spacing:0.125px;-webkit-text-stroke:0.3px #0a1a34;">DC</div>
<div class="t" style="left:267.00px;top:684.30px;font-size:15px;color:#0a1a34;letter-spacing:-0.250px;-webkit-text-stroke:0.3px #0a1a34;">AC</div>
<div class="t" style="left:353.40px;top:654.60px;font-size:15px;color:#0e1118;letter-spacing:0.955px;-webkit-text-stroke:0.3px #0e1118;">Termination</div>
<div class="t" style="left:353.02px;top:681.00px;font-size:15px;color:#0e1118;letter-spacing:0.348px;-webkit-text-stroke:0.3px #0e1118;">Set by TPP1000</div>
<div class="a" style="left:124px;top:809px;width:467px;height:34px;background:#a0b0ce;"></div>
<div class="t" style="left:129.50px;top:820.70px;font-size:15px;color:#0e1118;transform:scaleX(0.9140);transform-origin:0 0;-webkit-text-stroke:0.3px #0e1118;">PROBE SETUP</div>
<div class="a" style="left:124px;top:847px;width:467px;height:33px;background:#a0b0ce;"></div>
<div class="t" style="left:129.96px;top:857.60px;font-size:15px;color:#0e1118;transform:scaleX(0.9409);transform-origin:0 0;-webkit-text-stroke:0.3px #0e1118;">OTHER</div>
<svg width="1760" height="1030"><path d="M562 820.2 L568 820.2 L571 828 L568 836 L562 836 L565 828 Z" fill="#0e1118"/><path d="M562 857.3 L568 857.3 L571 865.4 L568 873.5 L562 873.5 L565 865.4 Z" fill="#0e1118"/></svg>
<svg width="1760" height="1030"><line x1="285" y1="87" x2="285" y2="126" stroke="#ff9900" stroke-width="4"/><circle cx="285" cy="126.5" r="9" fill="#ff9900"/><line x1="725" y1="130" x2="725" y2="382" stroke="#fff" stroke-width="8.5"/><circle cx="724.8" cy="382.8" r="11.2" fill="#fff"/><circle cx="1471" cy="137.5" r="11.2" fill="#fff"/><circle cx="1618" cy="958.2" r="11.2" fill="#fff"/><line x1="121" y1="363" x2="157" y2="363" stroke="#fff" stroke-width="8.5"/><circle cx="157" cy="363" r="11.2" fill="#fff"/><line x1="725" y1="87" x2="725" y2="382" stroke="#ff9900" stroke-width="4"/><circle cx="724.8" cy="382.8" r="9" fill="#ff9900"/><line x1="1471" y1="86" x2="1471" y2="137" stroke="#ff9900" stroke-width="4"/><circle cx="1471" cy="137.5" r="9" fill="#ff9900"/><line x1="1618" y1="959" x2="1675" y2="959" stroke="#ff9900" stroke-width="4"/><circle cx="1618" cy="958.2" r="9" fill="#ff9900"/><line x1="85" y1="363" x2="157" y2="363" stroke="#ff9900" stroke-width="4"/><circle cx="157" cy="363" r="9" fill="#ff9900"/><circle cx="285" cy="45.3" r="41.5" fill="#ff9900" stroke="#2a1c10" stroke-width="2"/><circle cx="724" cy="45.6" r="41.5" fill="#ff9900" stroke="#2a1c10" stroke-width="2"/><circle cx="1471" cy="43.2" r="41.5" fill="#ff9900" stroke="#2a1c10" stroke-width="2"/><circle cx="1716.4" cy="955.8" r="41.5" fill="#ff9900" stroke="#2a1c10" stroke-width="2"/><circle cx="43.2" cy="366.1" r="41.5" fill="#ff9900" stroke="#2a1c10" stroke-width="2"/><path d="M285.2 21.9 H290 V60.8 H284 V34 L275.9 38.8 V33.2 Z" fill="#0a0a0a"/></svg>
<div class="t" style="left:712.00px;top:13.91px;font-size:54.71px;color:#0a0a0a;font-weight:bold;transform:scaleX(0.7945);transform-origin:0 0;-webkit-text-stroke:0.6px #0a0a0a;">2</div>
<div class="t" style="left:1459.38px;top:10.79px;font-size:55.49px;color:#0a0a0a;font-weight:bold;transform:scaleX(0.7388);transform-origin:0 0;-webkit-text-stroke:0.6px #0a0a0a;">3</div>
<div class="t" style="left:1704.47px;top:923.21px;font-size:55.65px;color:#0a0a0a;font-weight:bold;transform:scaleX(0.7520);transform-origin:0 0;-webkit-text-stroke:0.6px #0a0a0a;">4</div>
<div class="t" style="left:32.12px;top:334.34px;font-size:54.86px;color:#0a0a0a;font-weight:bold;transform:scaleX(0.7766);transform-origin:0 0;-webkit-text-stroke:0.6px #0a0a0a;">5</div>
<div class="t" style="left:1543.72px;top:1006.07px;font-size:20px;color:#111;transform:scaleX(0.8516);transform-origin:0 0;-webkit-text-stroke:0.5px #111;">1497-016</div>
</body></html>
